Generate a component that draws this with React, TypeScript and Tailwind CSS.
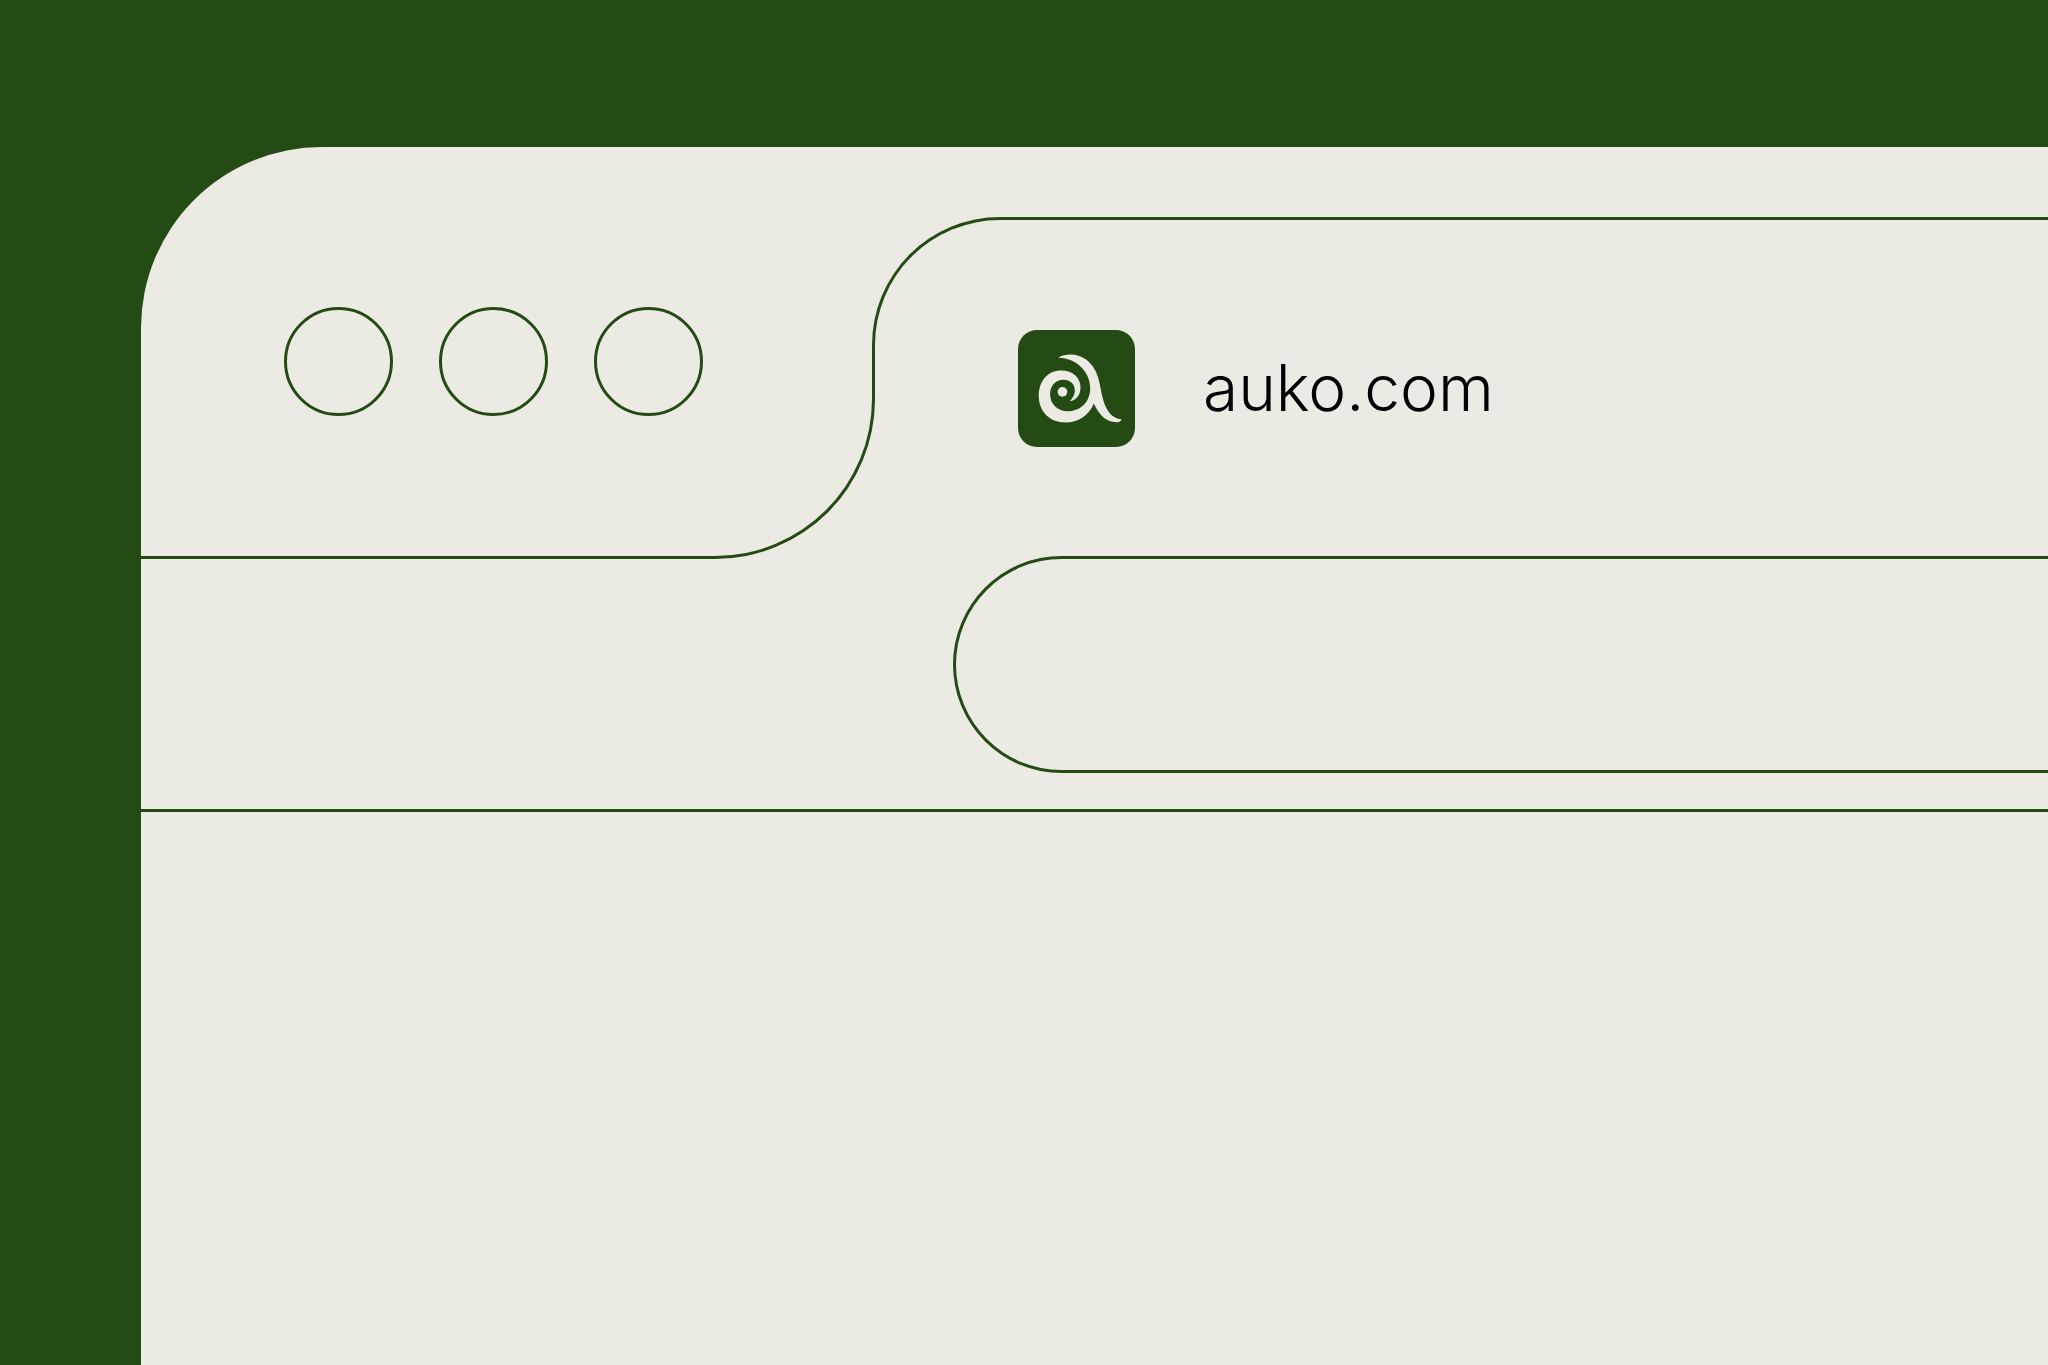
const windowButtons = ["Close", "Minimize", "Maximize"];

function Logo() {
  return (
    <svg
      viewBox="24 29 350 350"
      className="size-[117px] shrink-0 rounded-[19px] bg-[#244b14]"
      role="img"
      aria-label="Auko"
    >
      <g fill="#ecebe3">
        <path d="M145 112C152 105 168 102 184 102C222 103 253 132 264 172C271 197 273 220 281 245C291 273 306 293 332 296C335 299 331 302 326 304C296 308 270 292 251 249C236 285 204 306 166 306C118 306 86 272 86 226C86 181 114 150 153 150C188 150 211 172 211 200C211 222 199 239 179 242C188 233 194 222 194 210C194 191 180 178 160 178C137 178 120 196 120 221C120 251 143 272 173 272C212 272 240 243 240 203C240 157 203 114 145 112Z" />
        <circle cx="157" cy="214" r="14.5" />
      </g>
    </svg>
  );
}

function WindowControls() {
  return (
    <div className="grid shrink-0">
      <div className="col-start-1 row-start-1 h-[214px] self-end rounded-br-[160px] border-r-3 border-b-3 border-[#244b14]" />
      <div className="col-start-1 row-start-1 flex gap-[46px] pt-40 pr-[172px] pb-[143px] pl-[143px]">
        {windowButtons.map((label) => (
          <button
            key={label}
            type="button"
            aria-label={label}
            className="size-[109px] rounded-full border-3 border-[#244b14]"
          />
        ))}
      </div>
    </div>
  );
}

function Tab() {
  return (
    <div className="-ml-[3px] mt-[70px] grid flex-1">
      <div className="col-start-1 row-start-1 h-[128px] self-start rounded-tl-[128px] border-t-3 border-l-3 border-[#244b14]" />
      <div className="col-start-1 row-start-1 flex items-center gap-[68px] pl-[146px]">
        <Logo />
        <span className="text-[64px] leading-[80px] font-light text-black">
          auko.com
        </span>
      </div>
    </div>
  );
}

export default function App() {
  return (
    <div className="flex min-h-screen flex-col overflow-hidden bg-[#244b14] pt-[147px] pl-[141px] font-['Inter',sans-serif]">
      <main className="flex-1 rounded-tl-[181px] bg-[#ecebe3]">
        <header className="border-b-3 border-[#244b14]">
          <div className="flex">
            <WindowControls />
            <Tab />
          </div>
          <div className="-mt-[3px] flex pb-9 pl-[812px]">
            <input
              type="text"
              aria-label="Address"
              className="h-[217px] min-w-0 flex-1 rounded-l-full border-3 border-r-0 border-[#244b14] bg-transparent px-24 text-[64px] font-light text-black outline-none"
            />
          </div>
        </header>
      </main>
    </div>
  );
}
